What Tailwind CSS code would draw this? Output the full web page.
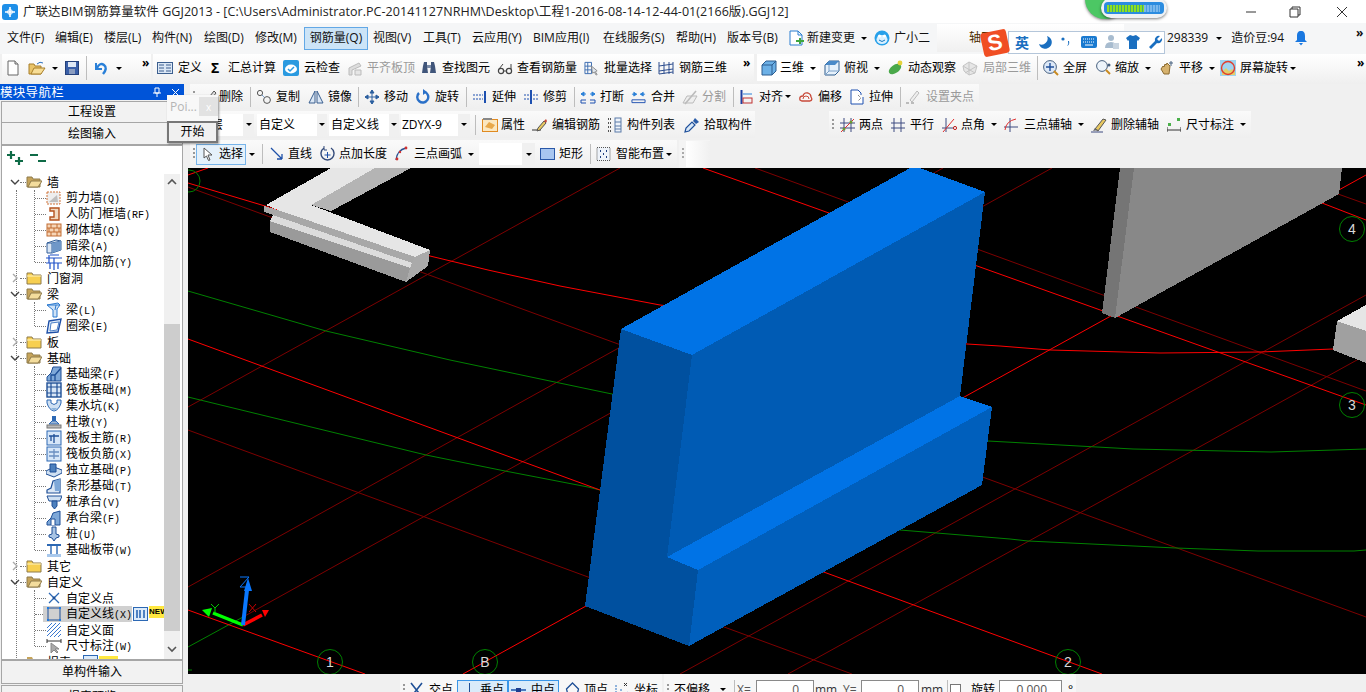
<!DOCTYPE html>
<html lang="zh">
<head>
<meta charset="utf-8">
<script src="https://cdn.jsdelivr.net/npm/@tailwindcss/browser@4"></script>
<title>GGJ2013</title>
</head>
<body class="relative w-[1366px] h-[692px] overflow-hidden bg-[#f0f0f0] text-black text-[12px] leading-4 whitespace-nowrap [font-family:'Open_Sans','Noto_Sans_CJK_SC',sans-serif]">

<!-- title bar -->
<div class="flex items-center h-[23px] bg-white">
  <svg class="w-4 h-4 ml-[2px] shrink-0" viewBox="0 0 16 16"><rect width="16" height="16" rx="3" fill="#1e8fe8"/><path d="M8 3v10M3 8h10" stroke="#fff" stroke-width="1.6"/><circle cx="8" cy="8" r="2.4" fill="none" stroke="#fff"/></svg>
  <span class="ml-[5px] text-[12.5px] tracking-[0.05px] text-[#222]">广联达BIM钢筋算量软件 GGJ2013 - [C:\Users\Administrator.PC-20141127NRHM\Desktop\工程1-2016-08-14-12-44-01(2166版).GGJ12]</span>
  <svg class="ml-auto w-[110px] h-[20px] shrink-0 mr-[12px]" viewBox="0 0 110 20"><path d="M2 10h10" stroke="#333"/><path d="M46 7h8v8h-8zM48 7V5h8v8h-2" fill="none" stroke="#333"/><path d="M93 5l10 10M103 5L93 15" stroke="#333"/></svg>
</div>

<!-- menu -->
<div class="flex items-center h-[31px] pb-[1px] bg-[#f5f6f7] pl-[7px] text-[#111]">
  <span class="w-[48px] shrink-0">文件(F)</span>
  <span class="w-[49px] shrink-0">编辑(E)</span>
  <span class="w-[48px] shrink-0">楼层(L)</span>
  <span class="w-[52px] shrink-0">构件(N)</span>
  <span class="w-[51px] shrink-0">绘图(D)</span>
  <span class="w-[49px] shrink-0">修改(M)</span>
  <span class="flex items-center justify-center w-[64px] h-[23px] shrink-0 bg-[#cce4f7] border border-[#62a8e6]">钢筋量(Q)</span>
  <span class="w-[50px] ml-[5px] shrink-0">视图(V)</span>
  <span class="w-[49px] shrink-0">工具(T)</span>
  <span class="w-[61px] shrink-0">云应用(Y)</span>
  <span class="w-[70px] shrink-0">BIM应用(I)</span>
  <span class="w-[73px] shrink-0">在线服务(S)</span>
  <span class="w-[51px] shrink-0">帮助(H)</span>
  <span class="w-[61px] shrink-0">版本号(B)</span>
  <div class="flex items-center w-[86px] shrink-0">
    <svg class="w-4 h-4 shrink-0" viewBox="0 0 16 16"><path d="M2 1h8l4 4v10H2z" fill="#fff" stroke="#2a7fd0"/><path d="M10 1v4h4" fill="none" stroke="#2a7fd0"/><path d="M8 10h3V8h2v2h3v2h-3v2h-2v-2H8z" fill="#3fa63f"/></svg>
    <span class="ml-[3px]">新建变更</span>
    <i class="ml-[6px] w-0 h-0 border-x-[3px] border-x-transparent border-t-[3px] border-t-black"></i>
  </div>
  <div class="flex items-center w-[63px] shrink-0">
    <svg class="w-4 h-4 shrink-0" viewBox="0 0 16 16"><circle cx="8" cy="8" r="7.5" fill="#26a0ea"/><ellipse cx="8" cy="9.5" rx="5.5" ry="4.5" fill="#d8f0ff"/><circle cx="5.5" cy="6" r="1.6" fill="#fff"/><circle cx="10.5" cy="6" r="1.6" fill="#fff"/><path d="M5 10q3 3 6 0" stroke="#1576bd" fill="none"/></svg>
    <span class="ml-[4px]">广小二</span>
  </div>
  <div class="flex items-center w-[187px] h-[28px] shrink-0 pl-[32px] bg-gradient-to-b from-white to-[#f0f0f0]"><span class="text-[#4a2b00]">轴网</span></div>
  <div class="flex items-center ml-[2px]">
    <span class="ml-[41px]">298339</span>
    <i class="ml-[8px] w-0 h-0 border-x-[3px] border-x-transparent border-t-[3px] border-t-black"></i>
    <span class="ml-[9px]">造价豆:94</span>
    <svg class="w-4 h-4 ml-[9px] shrink-0" viewBox="0 0 16 16"><path d="M8 1c-3 0-4 2-4 5v4l-2 2h12l-2-2V6c0-3-1-5-4-5z" fill="#1a78e0"/><path d="M6 13h4l-2 2.5z" fill="#1a78e0"/></svg>
    <span class="ml-[47px] font-bold leading-3 -mt-[10px]">»</span>
  </div>
</div>

<!-- main toolbar -->
<div class="flex h-[30px] bg-[#f0f0f0]">
  <div class="flex items-center w-[149px] ml-[2px] pl-[5px] pb-[2px] shrink-0 bg-gradient-to-b from-white to-[#efefef]">
    <svg class="w-[12px] h-4 shrink-0" viewBox="0 0 12 16"><path d="M1 1h7l3 3v11H1z" fill="#fff" stroke="#666"/><path d="M8 1v3h3" fill="#ddd" stroke="#666"/></svg>
    <svg class="w-[18px] h-4 ml-[9px] shrink-0" viewBox="0 0 18 16"><path d="M1 4h5l1 2h6v8H1z" fill="#e9c46a" stroke="#a87f2a"/><path d="M3 14l3-6h11l-4 6z" fill="#f7dd96" stroke="#a87f2a"/><path d="M9 4q3-3 6-1" stroke="#2a70c0" fill="none"/></svg>
    <i class="ml-[6px] w-0 h-0 border-x-[3px] border-x-transparent border-t-[3px] border-t-black"></i>
    <svg class="w-[14px] h-[14px] ml-[7px] shrink-0" viewBox="0 0 14 14"><rect x=".5" y=".5" width="13" height="13" fill="#3a5fa8" stroke="#24407a"/><rect x="3" y="1" width="8" height="5" fill="#dfe8f5"/><rect x="4" y="8" width="6" height="5" fill="#8b9dc0"/></svg>
    <i class="ml-[7px] w-px h-[24px] bg-[#bdbdbd]"></i>
    <svg class="w-[14px] h-[14px] ml-[7px] shrink-0" viewBox="0 0 14 14"><path d="M2 2v6h6" fill="none" stroke="#2a80d8" stroke-width="2"/><path d="M3 7q3-6 7-3t-1 9" fill="none" stroke="#2a80d8" stroke-width="2.4"/></svg>
    <i class="ml-[8px] w-0 h-0 border-x-[3px] border-x-transparent border-t-[3px] border-t-black"></i>
    <span class="ml-[20px] font-bold leading-3 -mt-[10px]">»</span>
  </div>
  <div class="flex items-center w-[601px] ml-[2px] pl-[4px] pb-[2px] shrink-0 bg-gradient-to-b from-white to-[#efefef]">
    <div class="flex items-center gap-[5px] w-[54px] shrink-0"><svg class="w-4 h-4 shrink-0" viewBox="0 0 16 16"><rect x=".5" y="2.5" width="15" height="11" fill="#dbe7f5" stroke="#3c5f8f"/><path d="M2 5h5M2 8h5M2 11h5M9 5h5M9 8h5M9 11h5" stroke="#3c5f8f"/></svg><span>定义</span></div>
    <div class="flex items-center w-[72px] shrink-0"><span class="w-[17px] font-bold text-[14px]">Σ</span><span>汇总计算</span></div>
    <div class="flex items-center gap-[5px] w-[64px] shrink-0"><svg class="w-4 h-4 shrink-0" viewBox="0 0 16 16"><rect width="16" height="16" rx="2" fill="#2a9ae0"/><ellipse cx="8" cy="9" rx="6" ry="4.4" fill="#fff"/><path d="M5 9l2 2 4-4" stroke="#2a9ae0" stroke-width="1.5" fill="none"/></svg><span>云检查</span></div>
    <div class="flex items-center gap-[4px] w-[74px] shrink-0 text-[#9a9a9a]"><svg class="w-4 h-4 shrink-0" viewBox="0 0 16 16"><path d="M2 8l10-5 2 3-9 4v5H2z" fill="#ddd" stroke="#bbb"/><path d="M8 10h6v5H8z" fill="#e6e6e6" stroke="#bbb"/></svg><span>平齐板顶</span></div>
    <div class="flex items-center gap-[5px] w-[76px] shrink-0"><svg class="w-4 h-4 shrink-0" viewBox="0 0 16 16"><path d="M3 2h3v4l1 7H1l1-7zM10 2h3l1 4 1 7H9l1-7z" fill="#40557a"/><rect x="6" y="5" width="4" height="3" fill="#7a8aa6"/></svg><span>查找图元</span></div>
    <div class="flex items-center gap-[4px] w-[87px] shrink-0"><svg class="w-4 h-4 shrink-0" viewBox="0 0 16 16"><circle cx="4" cy="11" r="2.6" fill="none" stroke="#444" stroke-width="1.2"/><circle cx="12" cy="11" r="2.6" fill="none" stroke="#444" stroke-width="1.2"/><path d="M2 9l4-5M14 9V4M6.5 11h3" stroke="#444"/></svg><span>查看钢筋量</span></div>
    <div class="flex items-center gap-[5px] w-[74px] shrink-0"><svg class="w-[15px] h-4 shrink-0" viewBox="0 0 16 16"><path d="M1 2h7v12H1zM1 6h7M1 10h7M4 2v12" fill="none" stroke="#3a6bb0"/><path d="M8 6l6 5-2 1 2 3-1 .5-2-3-2 1z" fill="#dfe6ee" stroke="#888"/></svg><span>批量选择</span></div>
    <div class="flex items-center gap-[5px] w-[85px] shrink-0"><svg class="w-4 h-4 shrink-0" viewBox="0 0 16 16"><path d="M1 2v12M6 2v12M11 2v12M15 2v12M1 6l14-2M1 11l14-2M1 14l14-2" fill="none" stroke="#2f4f8f"/></svg><span>钢筋三维</span></div>
    <span class="font-bold leading-3 -mt-[10px]">»</span>
  </div>
  <div class="flex items-center flex-1 ml-[3px] pb-[2px] bg-gradient-to-b from-white to-[#efefef]">
    <div class="flex items-center w-[63px] h-[25px] shrink-0 pl-[4px] bg-white">
      <svg class="w-4 h-4 shrink-0" viewBox="0 0 16 16"><path d="M1 5l4-4h10v10l-4 4H1z" fill="#6cb0e6" stroke="#2c5d8f"/><path d="M1 5h10v10M11 5l4-4" fill="none" stroke="#2c5d8f"/></svg><span class="ml-[3px]">三维</span><i class="ml-[6px] w-0 h-0 border-x-[3px] border-x-transparent border-t-[3px] border-t-black"></i>
    </div>
    <div class="flex items-center w-[64px] ml-[4px] shrink-0">
      <svg class="w-4 h-4 shrink-0" viewBox="0 0 16 16"><path d="M1 5l4-4h10v10l-4 4H1z" fill="#e6f1fb" stroke="#2c5d8f"/><path d="M5 1v10h10M1 15l4-4" fill="none" stroke="#7aa0c8"/><path d="M1 5l4-4h10l-4 4z" fill="#4a8ac8"/></svg><span class="ml-[4px]">俯视</span><i class="ml-[6px] w-0 h-0 border-x-[3px] border-x-transparent border-t-[3px] border-t-black"></i>
    </div>
    <div class="flex items-center gap-[4px] w-[74px] shrink-0"><svg class="w-4 h-4 shrink-0" viewBox="0 0 16 16"><ellipse cx="7" cy="9" rx="7" ry="4" transform="rotate(-35 7 9)" fill="#4aa84a"/><circle cx="12" cy="3" r="2.4" fill="#e6d23c"/></svg><span>动态观察</span></div>
    <div class="flex items-center gap-[5px] w-[75px] shrink-0 text-[#9a9a9a]"><svg class="w-4 h-4 shrink-0" viewBox="0 0 16 16"><path d="M1 6l6-4 8 4-2 7-6 2-5-4z" fill="#e6e6e6" stroke="#c4c4c4"/><path d="M7 2v13M1 6l12 7M15 6L3 13" stroke="#c4c4c4"/></svg><span>局部三维</span></div>
    <i class="w-px h-[24px] bg-[#bdbdbd] mr-[5px]"></i>
    <div class="flex items-center gap-[4px] w-[52px] shrink-0"><svg class="w-4 h-4 shrink-0" viewBox="0 0 16 16"><circle cx="7" cy="7" r="6.4" fill="#dce8f7" stroke="#47607f"/><path d="M7 3v8M3 7h8" stroke="#1f4f9a" stroke-width="1.4"/><path d="M11 11l4 4" stroke="#c98a20" stroke-width="2"/></svg><span>全屏</span></div>
    <div class="flex items-center gap-[4px] w-[64px] shrink-0"><svg class="w-4 h-4 shrink-0" viewBox="0 0 16 16"><circle cx="7" cy="6" r="5.4" fill="#edf4fb" stroke="#47607f"/><path d="M11 10l4 4" stroke="#c98a20" stroke-width="2"/><circle cx="14" cy="5" r="1.5" fill="#47607f"/></svg><span>缩放</span><i class="ml-[2px] w-0 h-0 border-x-[3px] border-x-transparent border-t-[3px] border-t-black"></i></div>
    <div class="flex items-center gap-[4px] w-[61px] shrink-0"><svg class="w-4 h-4 shrink-0" viewBox="0 0 16 16"><path d="M2 9l2-3 1 1 1-3 1 1 1-2 2 2 1 1-1 8H5z" fill="#d6b26e" stroke="#8a6a30"/><path d="M12 1v5M10 3h4" stroke="#47607f"/></svg><span>平移</span><i class="ml-[2px] w-0 h-0 border-x-[3px] border-x-transparent border-t-[3px] border-t-black"></i></div>
    <div class="flex items-center gap-[4px] shrink-0"><svg class="w-4 h-4 shrink-0" viewBox="0 0 16 16"><rect width="16" height="16" fill="#9fd3ef"/><path d="M2 12l4-4 3 3 3-2 3 3v3H2z" fill="#e2cf6a"/><circle cx="8" cy="8" r="6.5" fill="none" stroke="#e03c2c" stroke-width="1.4"/></svg><span>屏幕旋转</span><i class="-ml-[2px] w-0 h-0 border-x-[3px] border-x-transparent border-t-[3px] border-t-black"></i></div>
    <span class="ml-[61px] font-bold leading-3 -mt-[10px]">»</span>
  </div>
</div>

<div class="flex h-[608px]">
  <!-- left panel -->
  <div class="flex flex-col w-[184px] shrink-0">
    <div class="flex items-center h-[16px] bg-[#0054d8] text-white text-[12.5px] tracking-[0.3px] leading-4 shrink-0">
      <span class="[font-family:'Noto_Sans_CJK_SC',sans-serif]">模块导航栏</span>
      <svg class="w-[10px] h-[10px] ml-[88px] shrink-0" viewBox="0 0 10 10"><path d="M3 1h4v5H3zM1 6h8M5 6v4" fill="none" stroke="#fff"/></svg>
      <svg class="w-[9px] h-[9px] ml-[9px] shrink-0" viewBox="0 0 9 9"><path d="M1 1l7 7M8 1L1 8" stroke="#fff"/></svg>
    </div>
    <div class="flex items-center justify-center h-[22px] mx-[1px] mt-[1px] shrink-0 bg-[#f2f2f2] border border-[#a6a6a6]">工程设置</div>
    <div class="flex items-center justify-center h-[22px] mx-[1px] shrink-0 bg-[#f2f2f2] border-x border-b border-[#a6a6a6]">绘图输入</div>
    <div class="flex flex-col h-[515px] mx-[1px] shrink-0 bg-white border border-[#a6a6a6] overflow-hidden">
      <div class="flex items-start h-[28px] pl-[5px] pt-[5px] shrink-0">
        <svg class="w-[16px] h-[15px] shrink-0" viewBox="0 0 16 15"><path d="M4 0v8M0 4h8M12 6v8M8 10h8" stroke="#0f6b47" stroke-width="2.2"/></svg>
        <svg class="w-[16px] h-[15px] ml-[7px] shrink-0" viewBox="0 0 16 15"><path d="M0 4h8M8 10h8" stroke="#0f6b47" stroke-width="2.2"/></svg>
      </div>
      <div class="relative flex flex-1 min-h-0">
        <div class="relative w-[162px] overflow-hidden shrink-0 text-[12px] leading-4 [font-family:'Noto_Sans_CJK_SC',sans-serif]">
          <i class="absolute left-[14px] top-[16px] h-[480px] border-l border-dotted border-[#777]"></i>
          <i class="absolute left-[32px] top-[16px] h-[72px] border-l border-dotted border-[#777]"></i>
          <i class="absolute left-[32px] top-[128px] h-[24px] border-l border-dotted border-[#777]"></i>
          <i class="absolute left-[32px] top-[192px] h-[184px] border-l border-dotted border-[#777]"></i>
          <i class="absolute left-[32px] top-[416px] h-[56px] border-l border-dotted border-[#777]"></i>

          <!-- 墙 -->
          <div class="relative flex items-center h-4 pl-[8px]"><svg class="w-[10px] h-4 shrink-0" viewBox="0 0 10 16"><path d="M1 6l4 4 4-4" fill="none" stroke="#444" stroke-width="1.4"/></svg><i class="w-[6px] shrink-0 border-t border-dotted border-[#777]"></i><svg class="w-4 h-4 shrink-0" viewBox="0 0 16 16"><path d="M1 3h5l1 2h7v8H1z" fill="#c6a45a" stroke="#8e7a4a"/><path d="M2 13l3-6h11l-4 6z" fill="#f3dc9c" stroke="#8e7a4a"/></svg><span class="ml-[5px]">墙</span></div>
          <div class="relative flex items-center h-4 pl-[33px]"><i class="w-[11px] shrink-0 border-t border-dotted border-[#777]"></i><svg class="w-4 h-4 shrink-0" viewBox="0 0 16 16"><rect x="1" y="2" width="13" height="12" fill="#eee" stroke="#d2743a" stroke-dasharray="2 1"/><path d="M3 12l8-7 1 7z" fill="#aaa" opacity=".7"/></svg><span class="ml-[4px]">剪力墙<span class="[font-family:'Liberation_Mono',monospace] text-[10px]">(Q)</span></span></div>
          <div class="relative flex items-center h-4 pl-[33px]"><i class="w-[11px] shrink-0 border-t border-dotted border-[#777]"></i><svg class="w-4 h-4 shrink-0" viewBox="0 0 16 16"><path d="M4 2h9v12H4v-3h4V5H4z" fill="#f1d9c0" stroke="#b4521e" stroke-width="1.4"/></svg><span class="ml-[4px]">人防门框墙<span class="[font-family:'Liberation_Mono',monospace] text-[10px]">(RF)</span></span></div>
          <div class="relative flex items-center h-4 pl-[33px]"><i class="w-[11px] shrink-0 border-t border-dotted border-[#777]"></i><svg class="w-4 h-4 shrink-0" viewBox="0 0 16 16"><rect x="1" y="2" width="14" height="12" fill="#f6d6b8" stroke="#c26c32"/><path d="M1 6h14M1 10h14M5 2v4M11 2v4M8 6v4M3 6v4M13 6v4M5 10v4M11 10v4" stroke="#c26c32"/></svg><span class="ml-[4px]">砌体墙<span class="[font-family:'Liberation_Mono',monospace] text-[10px]">(Q)</span></span></div>
          <div class="relative flex items-center h-4 pl-[33px]"><i class="w-[11px] shrink-0 border-t border-dotted border-[#777]"></i><svg class="w-4 h-4 shrink-0" viewBox="0 0 16 16"><path d="M1 5l9-3 5 1v9l-9 3H1z" fill="#dbe7f5" stroke="#335f99"/><path d="M1 5h5v10M6 5l9-2" fill="none" stroke="#335f99"/><path d="M6 5l9-2v9l-9 3z" fill="#6f97c8"/></svg><span class="ml-[4px]">暗梁<span class="[font-family:'Liberation_Mono',monospace] text-[10px]">(A)</span></span></div>
          <div class="relative flex items-center h-4 pl-[33px]"><i class="w-[11px] shrink-0 border-t border-dotted border-[#777]"></i><svg class="w-4 h-4 shrink-0" viewBox="0 0 16 16"><path d="M0 4h16M0 9h16M4 1h9M8 4v12M4 9v6M12 9v6M3 1v8" fill="none" stroke="#1e50c8" stroke-width="1.2"/></svg><span class="ml-[4px]">砌体加筋<span class="[font-family:'Liberation_Mono',monospace] text-[10px]">(Y)</span></span></div>

          <!-- 门窗洞 -->
          <div class="relative flex items-center h-4 pl-[8px]"><svg class="w-[10px] h-4 shrink-0" viewBox="0 0 10 16"><path d="M3 4l4 4-4 4" fill="none" stroke="#aaa" stroke-width="1.4"/></svg><i class="w-[6px] shrink-0 border-t border-dotted border-[#777]"></i><svg class="w-4 h-4 shrink-0" viewBox="0 0 16 16"><path d="M1 3h5l1 2h8v9H1z" fill="#f7cf50" stroke="#8e7a4a"/><path d="M1 6h14" stroke="#fff3c0"/></svg><span class="ml-[5px]">门窗洞</span></div>

          <!-- 梁 -->
          <div class="relative flex items-center h-4 pl-[8px]"><svg class="w-[10px] h-4 shrink-0" viewBox="0 0 10 16"><path d="M1 6l4 4 4-4" fill="none" stroke="#444" stroke-width="1.4"/></svg><i class="w-[6px] shrink-0 border-t border-dotted border-[#777]"></i><svg class="w-4 h-4 shrink-0" viewBox="0 0 16 16"><path d="M1 3h5l1 2h7v8H1z" fill="#c6a45a" stroke="#8e7a4a"/><path d="M2 13l3-6h11l-4 6z" fill="#f3dc9c" stroke="#8e7a4a"/></svg><span class="ml-[5px]">梁</span></div>
          <div class="relative flex items-center h-4 pl-[33px]"><i class="w-[11px] shrink-0 border-t border-dotted border-[#777]"></i><svg class="w-4 h-4 shrink-0" viewBox="0 0 16 16"><path d="M1 3l11-2 2 2-3 4v8H7V8z" fill="#cfe2f6" stroke="#2d7ad0"/><path d="M1 3h9l-1 5M10 3l4 0" fill="none" stroke="#2d7ad0"/></svg><span class="ml-[4px]">梁<span class="[font-family:'Liberation_Mono',monospace] text-[10px]">(L)</span></span></div>
          <div class="relative flex items-center h-4 pl-[33px]"><i class="w-[11px] shrink-0 border-t border-dotted border-[#777]"></i><svg class="w-4 h-4 shrink-0" viewBox="0 0 16 16"><path d="M3 3l12-2-3 13-11 1z" fill="#e3eefa" stroke="#1e50a8" stroke-width="1.4"/><path d="M5 5l8-1-2 8-7 1z" fill="#fff" stroke="#4b7fc8"/></svg><span class="ml-[4px]">圈梁<span class="[font-family:'Liberation_Mono',monospace] text-[10px]">(E)</span></span></div>

          <!-- 板 -->
          <div class="relative flex items-center h-4 pl-[8px]"><svg class="w-[10px] h-4 shrink-0" viewBox="0 0 10 16"><path d="M3 4l4 4-4 4" fill="none" stroke="#aaa" stroke-width="1.4"/></svg><i class="w-[6px] shrink-0 border-t border-dotted border-[#777]"></i><svg class="w-4 h-4 shrink-0" viewBox="0 0 16 16"><path d="M1 3h5l1 2h8v9H1z" fill="#f7cf50" stroke="#8e7a4a"/><path d="M1 6h14" stroke="#fff3c0"/></svg><span class="ml-[5px]">板</span></div>

          <!-- 基础 -->
          <div class="relative flex items-center h-4 pl-[8px]"><svg class="w-[10px] h-4 shrink-0" viewBox="0 0 10 16"><path d="M1 6l4 4 4-4" fill="none" stroke="#444" stroke-width="1.4"/></svg><i class="w-[6px] shrink-0 border-t border-dotted border-[#777]"></i><svg class="w-4 h-4 shrink-0" viewBox="0 0 16 16"><path d="M1 3h5l1 2h7v8H1z" fill="#c6a45a" stroke="#8e7a4a"/><path d="M2 13l3-6h11l-4 6z" fill="#f3dc9c" stroke="#8e7a4a"/></svg><span class="ml-[5px]">基础</span></div>
          <div class="relative flex items-center h-4 pl-[33px]"><i class="w-[11px] shrink-0 border-t border-dotted border-[#777]"></i><svg class="w-4 h-4 shrink-0" viewBox="0 0 16 16"><path d="M1 15V11l4-4 2-6h8v14z" fill="#7ea8d8" stroke="#1e4f96"/><path d="M5 15V9h4v6M9 9l6-7" fill="none" stroke="#1e4f96" stroke-width="1.3"/></svg><span class="ml-[4px]">基础梁<span class="[font-family:'Liberation_Mono',monospace] text-[10px]">(F)</span></span></div>
          <div class="relative flex items-center h-4 pl-[33px]"><i class="w-[11px] shrink-0 border-t border-dotted border-[#777]"></i><svg class="w-4 h-4 shrink-0" viewBox="0 0 16 16"><rect x="1" y="1" width="14" height="14" fill="#d8e6f6" stroke="#1e4f96" stroke-width="1.4"/><path d="M1 5h14M1 11h14M5 1v14M11 1v14" stroke="#1e4f96" stroke-width="1.2"/></svg><span class="ml-[4px]">筏板基础<span class="[font-family:'Liberation_Mono',monospace] text-[10px]">(M)</span></span></div>
          <div class="relative flex items-center h-4 pl-[33px]"><i class="w-[11px] shrink-0 border-t border-dotted border-[#777]"></i><svg class="w-4 h-4 shrink-0" viewBox="0 0 16 16"><path d="M1 2h4v3q3 3 6 0V2h4v3q-2 7-7 8-5-1-7-8z" fill="#cfe0f2" stroke="#2c68b4"/><path d="M5 10h6l-3 3z" fill="#8cb4de"/></svg><span class="ml-[4px]">集水坑<span class="[font-family:'Liberation_Mono',monospace] text-[10px]">(K)</span></span></div>
          <div class="relative flex items-center h-4 pl-[33px]"><i class="w-[11px] shrink-0 border-t border-dotted border-[#777]"></i><svg class="w-4 h-4 shrink-0" viewBox="0 0 16 16"><path d="M6 2h4v5H6z" fill="#2c68b4"/><path d="M3 10l3-3h4l3 3z" fill="#9fb8d6" stroke="#2c68b4"/><rect x="1" y="11" width="14" height="3" fill="#bbb" stroke="#777"/></svg><span class="ml-[4px]">柱墩<span class="[font-family:'Liberation_Mono',monospace] text-[10px]">(Y)</span></span></div>
          <div class="relative flex items-center h-4 pl-[33px]"><i class="w-[11px] shrink-0 border-t border-dotted border-[#777]"></i><svg class="w-4 h-4 shrink-0" viewBox="0 0 16 16"><rect x="1" y="1" width="14" height="14" fill="#d6e6f8" stroke="#2c68b4"/><path d="M3 6h10M8 4v9M5 6v5" fill="none" stroke="#1e4f96" stroke-width="1.3"/></svg><span class="ml-[4px]">筏板主筋<span class="[font-family:'Liberation_Mono',monospace] text-[10px]">(R)</span></span></div>
          <div class="relative flex items-center h-4 pl-[33px]"><i class="w-[11px] shrink-0 border-t border-dotted border-[#777]"></i><svg class="w-4 h-4 shrink-0" viewBox="0 0 16 16"><rect x="1" y="1" width="14" height="14" fill="#d6e6f8" stroke="#2c68b4"/><path d="M3 6h10M3 10h10M8 3v10" fill="none" stroke="#6a8fc0" stroke-width="1.3"/></svg><span class="ml-[4px]">筏板负筋<span class="[font-family:'Liberation_Mono',monospace] text-[10px]">(X)</span></span></div>
          <div class="relative flex items-center h-4 pl-[33px]"><i class="w-[11px] shrink-0 border-t border-dotted border-[#777]"></i><svg class="w-4 h-4 shrink-0" viewBox="0 0 16 16"><path d="M0 9l8-4 8 3v3l-8 4-8-3z" fill="#cfe0f2" stroke="#1e4f96"/><path d="M4 2h6v8H4z" fill="#4d80bd" stroke="#1e4f96"/></svg><span class="ml-[4px]">独立基础<span class="[font-family:'Liberation_Mono',monospace] text-[10px]">(P)</span></span></div>
          <div class="relative flex items-center h-4 pl-[33px]"><i class="w-[11px] shrink-0 border-t border-dotted border-[#777]"></i><svg class="w-4 h-4 shrink-0" viewBox="0 0 16 16"><path d="M1 15v-3l4-2 2-7 7-2v14z" fill="#dbe7f5" stroke="#1e4f96" stroke-width="1.2"/><path d="M8 3l6-2v12H9z" fill="#7ea8d8"/></svg><span class="ml-[4px]">条形基础<span class="[font-family:'Liberation_Mono',monospace] text-[10px]">(T)</span></span></div>
          <div class="relative flex items-center h-4 pl-[33px]"><i class="w-[11px] shrink-0 border-t border-dotted border-[#777]"></i><svg class="w-4 h-4 shrink-0" viewBox="0 0 16 16"><path d="M1 2h15l-2 5H3z" fill="#cfe0f2" stroke="#1e4f96"/><path d="M6 7h5v5l-2.500 3L6 12z" fill="#4d80bd" stroke="#1e4f96"/></svg><span class="ml-[4px]">桩承台<span class="[font-family:'Liberation_Mono',monospace] text-[10px]">(V)</span></span></div>
          <div class="relative flex items-center h-4 pl-[33px]"><i class="w-[11px] shrink-0 border-t border-dotted border-[#777]"></i><svg class="w-4 h-4 shrink-0" viewBox="0 0 16 16"><path d="M1 15v-3l4-4 2-5 7-2v14z" fill="#7ea8d8" stroke="#1e4f96"/><path d="M5 15V9h4v6" fill="#fff" stroke="#1e4f96"/></svg><span class="ml-[4px]">承台梁<span class="[font-family:'Liberation_Mono',monospace] text-[10px]">(F)</span></span></div>
          <div class="relative flex items-center h-4 pl-[33px]"><i class="w-[11px] shrink-0 border-t border-dotted border-[#777]"></i><svg class="w-4 h-4 shrink-0" viewBox="0 0 16 16"><path d="M6 1h4v7l3 1v2l-3 1-2 3-2-3-3-1V9l3-1z" fill="#a8c4e4" stroke="#1e4f96"/></svg><span class="ml-[4px]">桩<span class="[font-family:'Liberation_Mono',monospace] text-[10px]">(U)</span></span></div>
          <div class="relative flex items-center h-4 pl-[33px]"><i class="w-[11px] shrink-0 border-t border-dotted border-[#777]"></i><svg class="w-4 h-4 shrink-0" viewBox="0 0 16 16"><rect x="1" y="2" width="14" height="2" fill="#2c68b4"/><path d="M5 4v8M11 4v8" stroke="#2c68b4" stroke-width="1.4"/><rect x="1" y="12" width="14" height="3" fill="#a8c8ec"/></svg><span class="ml-[4px]">基础板带<span class="[font-family:'Liberation_Mono',monospace] text-[10px]">(W)</span></span></div>

          <!-- 其它 -->
          <div class="relative flex items-center h-4 pl-[8px]"><svg class="w-[10px] h-4 shrink-0" viewBox="0 0 10 16"><path d="M3 4l4 4-4 4" fill="none" stroke="#aaa" stroke-width="1.4"/></svg><i class="w-[6px] shrink-0 border-t border-dotted border-[#777]"></i><svg class="w-4 h-4 shrink-0" viewBox="0 0 16 16"><path d="M1 3h5l1 2h8v9H1z" fill="#f7cf50" stroke="#8e7a4a"/><path d="M1 6h14" stroke="#fff3c0"/></svg><span class="ml-[5px]">其它</span></div>

          <!-- 自定义 -->
          <div class="relative flex items-center h-4 pl-[8px]"><svg class="w-[10px] h-4 shrink-0" viewBox="0 0 10 16"><path d="M1 6l4 4 4-4" fill="none" stroke="#444" stroke-width="1.4"/></svg><i class="w-[6px] shrink-0 border-t border-dotted border-[#777]"></i><svg class="w-4 h-4 shrink-0" viewBox="0 0 16 16"><path d="M1 3h5l1 2h7v8H1z" fill="#c6a45a" stroke="#8e7a4a"/><path d="M2 13l3-6h11l-4 6z" fill="#f3dc9c" stroke="#8e7a4a"/></svg><span class="ml-[5px]">自定义</span></div>
          <div class="relative flex items-center h-4 pl-[33px]"><i class="w-[11px] shrink-0 border-t border-dotted border-[#777]"></i><svg class="w-4 h-4 shrink-0" viewBox="0 0 16 16"><path d="M3 3l10 10M13 3L3 13" stroke="#2c68b4" stroke-width="1.3"/><circle cx="8" cy="8" r="1.4" fill="#1e4f96"/></svg><span class="ml-[4px]">自定义点</span></div>
          <div class="relative flex items-center h-4 pl-[33px]"><i class="w-[8px] shrink-0 border-t border-dotted border-[#777]"></i><div class="flex items-center h-4 pl-[3px] shrink-0 bg-[#d0d0d0]"><svg class="w-4 h-4 shrink-0" viewBox="0 0 16 16"><rect x="2" y="2" width="12" height="12" fill="none" stroke="#1e4f96"/><path d="M1 1h2v2H1zM13 1h2v2h-2zM1 13h2v2H1zM13 13h2v2h-2z" fill="#1e7ae0"/></svg><span class="ml-[4px]">自定义线<span class="[font-family:'Liberation_Mono',monospace] text-[10px]">(X)</span></span></div><svg class="w-[15px] h-[14px] ml-[1px] shrink-0" viewBox="0 0 15 14"><rect x=".5" y=".5" width="14" height="13" fill="#dcebfa" stroke="#2c68b4"/><path d="M4 3v8M7 3v8M11 3v8" stroke="#2c68b4" stroke-width="1.6"/></svg><span class="ml-[1px] -mt-[4px] text-[8px] leading-3 font-bold bg-[#ffe840] [font-family:'Liberation_Sans',sans-serif]">NEW</span></div>
          <div class="relative flex items-center h-4 pl-[33px]"><i class="w-[11px] shrink-0 border-t border-dotted border-[#777]"></i><svg class="w-4 h-4 shrink-0" viewBox="0 0 16 16"><path d="M1 6l5-5M1 10l9-9M1 14L14 1M4 15L15 4M8 15l7-7M12 15l3-3" stroke="#3a78d0"/></svg><span class="ml-[4px]">自定义面</span></div>
          <div class="relative flex items-center h-4 pl-[33px]"><i class="w-[11px] shrink-0 border-t border-dotted border-[#777]"></i><svg class="w-4 h-4 shrink-0" viewBox="0 0 16 16"><path d="M1 1v4M15 1v4M1 3h14" stroke="#333"/><path d="M5 5v10l3-3 3 3 1-1-3-3h4z" fill="#aaa" stroke="#888"/></svg><span class="ml-[4px]">尺寸标注<span class="[font-family:'Liberation_Mono',monospace] text-[10px]">(W)</span></span></div>
          <div class="relative flex items-center h-4 pl-[24px]"><svg class="w-4 h-4 shrink-0" viewBox="0 0 16 16"><path d="M1 3h5l1 2h7v8H1z" fill="#c6a45a"/></svg><span class="ml-[5px]">报表</span><svg class="w-[15px] h-[14px] ml-[12px] shrink-0" viewBox="0 0 15 14"><rect x=".5" y=".5" width="14" height="13" fill="#dcebfa" stroke="#2c68b4"/></svg><span class="ml-[1px] text-[8px] leading-3 font-bold bg-[#ffe840] [font-family:'Liberation_Sans',sans-serif]">NEW</span></div>
        </div>
        <!-- scrollbar -->
        <div class="flex flex-col w-[16px] shrink-0 bg-[#f0f0f0]">
          <svg class="w-4 h-4 shrink-0" viewBox="0 0 16 16"><path d="M4 10l4-4 4 4" fill="none" stroke="#555" stroke-width="1.6"/></svg>
          <div class="h-[134px] shrink-0"></div>
          <div class="h-[307px] shrink-0 bg-[#cdcdcd]"></div>
          <div class="h-[10px] shrink-0"></div>
          <svg class="w-4 h-4 shrink-0" viewBox="0 0 16 16"><path d="M4 6l4 4 4-4" fill="none" stroke="#555" stroke-width="1.6"/></svg>
        </div>
      </div>
    </div>
    <div class="flex items-center justify-center h-[24px] mx-[1px] shrink-0 bg-[#f2f2f2] border border-[#a6a6a6]">单构件输入</div>
    <div class="flex items-center justify-center h-[24px] mx-[1px] mt-[1px] shrink-0 bg-[#f2f2f2] border border-[#a6a6a6]">报表预览</div>
  </div>

  <!-- right -->
  <div class="flex flex-col ml-[4px] w-[1178px] shrink-0">
    <!-- row 3: edit tools -->
    <div class="h-[27px] shrink-0">
      <div class="flex items-center w-[789px] h-[25px] ml-[2px] pl-[3px] bg-gradient-to-b from-[#fafafa] to-[#efefef]">
        <svg class="w-[3px] h-[14px] shrink-0" viewBox="0 0 3 14"><path d="M1 1v12" stroke="#999" stroke-width="2" stroke-dasharray="2 2"/></svg>
        <div class="flex items-center gap-[2px] w-[45px] ml-[9px] shrink-0"><svg class="w-[12px] h-4 shrink-0" viewBox="0 0 12 16"><path d="M1 12L9 2l2 2-7 9z" fill="#ddd" stroke="#555"/></svg><span>删除</span></div>
        <i class="w-px h-[20px] bg-[#bdbdbd] mr-[5px]"></i>
        <div class="flex items-center gap-[4px] w-[52px] shrink-0"><svg class="w-4 h-4 shrink-0" viewBox="0 0 16 16"><circle cx="4" cy="4" r="2.6" fill="none" stroke="#555"/><circle cx="11" cy="11" r="3.4" fill="none" stroke="#555"/><path d="M6 6l3 3" stroke="#2a70c0" stroke-dasharray="1 1"/></svg><span>复制</span></div>
        <div class="flex items-center gap-[4px] w-[50px] shrink-0"><svg class="w-4 h-4 shrink-0" viewBox="0 0 16 16"><path d="M7 2v12H1zM9 2v12h6z" fill="#dbe7f5" stroke="#3a5f8f"/></svg><span>镜像</span></div>
        <i class="w-px h-[20px] bg-[#bdbdbd] mr-[6px]"></i>
        <div class="flex items-center gap-[5px] w-[51px] shrink-0"><svg class="w-[14px] h-4 shrink-0" viewBox="0 0 14 16"><path d="M7 1v14M0 8h14M7 1L5 4h4zM7 15l-2-3h4zM0 8l3-2v4zM14 8l-3-2v4z" fill="#2a5f9f" stroke="#2a5f9f"/></svg><span>移动</span></div>
        <div class="flex items-center gap-[5px] w-[50px] shrink-0"><svg class="w-[14px] h-4 shrink-0" viewBox="0 0 14 16"><path d="M3 4a5.500 5.500 0 1 0 6-1" fill="none" stroke="#2a70c8" stroke-width="2.400"/><path d="M7 0v6l4-3z" fill="#2a70c8"/></svg><span>旋转</span></div>
        <i class="w-px h-[20px] bg-[#bdbdbd] mr-[6px]"></i>
        <div class="flex items-center gap-[5px] w-[51px] shrink-0"><svg class="w-[14px] h-4 shrink-0" viewBox="0 0 14 16"><path d="M0 6h10M0 10h10" stroke="#1e50b0" stroke-dasharray="2 1"/><path d="M12 2v12" stroke="#1e50b0" stroke-width="2"/></svg><span>延伸</span></div>
        <div class="flex items-center gap-[5px] w-[50px] shrink-0"><svg class="w-[14px] h-4 shrink-0" viewBox="0 0 14 16"><path d="M0 6h6M0 10h6M9 6h5M9 10h5" stroke="#1e50b0" stroke-dasharray="2 1"/><path d="M7 1v14" stroke="#1e50b0" stroke-width="2"/></svg><span>修剪</span></div>
        <i class="w-px h-[20px] bg-[#bdbdbd] mr-[5px]"></i>
        <div class="flex items-center gap-[4px] w-[51px] shrink-0"><svg class="w-4 h-4 shrink-0" viewBox="0 0 16 16"><path d="M1 11h5M10 11h5M1 14h5M10 14h5M1 11v3M15 11v3" stroke="#1e50b0" fill="none"/><path d="M6 5H1M1 5l3-2v4zM10 5h5M15 5l-3-2v4z" fill="#2a80d8" stroke="#2a80d8"/></svg><span>打断</span></div>
        <div class="flex items-center gap-[5px] w-[51px] shrink-0"><svg class="w-[15px] h-4 shrink-0" viewBox="0 0 16 16"><path d="M1 11h14M1 14h14M1 11v3M15 11v3" stroke="#1e50b0" fill="none"/><path d="M1 5h5M6 5L3 3v4zM15 5h-5M10 5l3-2v4z" fill="#2a80d8" stroke="#2a80d8"/></svg><span>合并</span></div>
        <div class="flex items-center gap-[4px] w-[51px] shrink-0 text-[#9a9a9a]"><svg class="w-4 h-4 shrink-0" viewBox="0 0 16 16"><path d="M1 14l4-7h10l-4 7z" fill="#eee" stroke="#bbb"/><path d="M3 15L14 2" stroke="#bbb" stroke-width="1.600"/></svg><span>分割</span></div>
        <i class="w-px h-[20px] bg-[#bdbdbd] mr-[6px]"></i>
        <div class="flex items-center w-[59px] shrink-0"><svg class="w-[13px] h-4 shrink-0" viewBox="0 0 13 16"><path d="M1.500 1v14" stroke="#1e3fa0" stroke-width="2"/><path d="M3 5h9" stroke="#2a80d8"/><rect x="3" y="9" width="9" height="5" fill="none" stroke="#c03030"/></svg><span class="ml-[6px]">对齐</span><i class="ml-[2px] w-0 h-0 border-x-[3px] border-x-transparent border-t-[3px] border-t-black"></i></div>
        <div class="flex items-center gap-[5px] w-[51px] shrink-0"><svg class="w-[14px] h-4 shrink-0" viewBox="0 0 14 16"><path d="M1 11q-1-4 3-4 1-4 5-3 3 1 3 4 2 3-1 4H3z" fill="#f7f7f7" stroke="#c84a3a" stroke-width="1.300"/><path d="M4 10q0-3 3-3 3 0 3 3" fill="none" stroke="#c84a3a"/></svg><span>偏移</span></div>
        <div class="flex items-center gap-[5px] w-[50px] shrink-0"><svg class="w-[14px] h-4 shrink-0" viewBox="0 0 14 16"><path d="M1 1h7l3 3v2M1 1v14h12V8" fill="#fff" stroke="#1e50b0"/><path d="M8 6l3 3-3 3" fill="none" stroke="#555" stroke-dasharray="1 1"/></svg><span>拉伸</span></div>
        <i class="w-px h-[20px] bg-[#bdbdbd] mr-[5px]"></i>
        <div class="flex items-center gap-[6px] shrink-0 text-[#9a9a9a]"><svg class="w-[14px] h-4 shrink-0" viewBox="0 0 14 16"><path d="M4 11l7-9 2 2-7 9z" fill="#eee" stroke="#bbb"/><path d="M0 14h3M5 14h3" stroke="#bbb" stroke-width="2"/></svg><span>设置夹点</span></div>
      </div>
    </div>
    <!-- row 4 -->
    <div class="flex h-[28px] shrink-0 ml-[2px]">
      <div class="flex items-center w-[565px] h-[27px] shrink-0 bg-gradient-to-b from-[#fafafa] to-[#efefef]">
        <div class="flex items-center justify-end w-[64px] h-[22px] shrink-0 bg-white"><span class="mr-[20px]">首层</span><div class="flex items-center justify-center w-[11px] h-[22px] bg-[#f0f0f0]"><i class="w-0 h-0 border-x-[3px] border-x-transparent border-t-[3px] border-t-black"></i></div></div>
        <div class="flex items-center w-[70px] h-[22px] ml-[3px] pl-[2px] shrink-0 bg-white"><span>自定义</span><div class="flex items-center justify-center w-[10px] h-[22px] ml-auto bg-[#f0f0f0]"><i class="w-0 h-0 border-x-[3px] border-x-transparent border-t-[3px] border-t-black"></i></div></div>
        <div class="flex items-center w-[70px] h-[22px] ml-[2px] pl-[2px] shrink-0 bg-white"><span>自定义线</span><div class="flex items-center justify-center w-[10px] h-[22px] ml-auto bg-[#f0f0f0]"><i class="w-0 h-0 border-x-[3px] border-x-transparent border-t-[3px] border-t-black"></i></div></div>
        <div class="flex items-center w-[69px] h-[22px] ml-[2px] pl-[1px] shrink-0 bg-white"><span>ZDYX-9</span><div class="flex items-center justify-center w-[12px] h-[22px] ml-auto bg-[#f0f0f0]"><i class="w-0 h-0 border-x-[3px] border-x-transparent border-t-[3px] border-t-black"></i></div></div>
        <i class="w-px h-[20px] ml-[5px] mr-[6px] bg-[#bdbdbd]"></i>
        <div class="flex items-center gap-[3px] w-[50px] shrink-0"><svg class="w-4 h-4 shrink-0" viewBox="0 0 16 16"><rect x=".5" y="2.500" width="15" height="12" fill="#fbe7c0" stroke="#e08a20"/><path d="M3 10l4-5 6 3-3 4z" fill="#e8a84a"/><path d="M1 1h9v2H1z" fill="#888"/></svg><span>属性</span></div>
        <div class="flex items-center gap-[4px] w-[76px] shrink-0"><svg class="w-4 h-4 shrink-0" viewBox="0 0 16 16"><path d="M0 13h9" stroke="#333"/><path d="M6 11l6-7 2 2-6 7-3 1z" fill="#e8c860" stroke="#555"/><path d="M12 4l2-2 1 2-1 2z" fill="#c84a3a"/></svg><span>编辑钢筋</span></div>
        <div class="flex items-center gap-[5px] w-[76px] shrink-0"><svg class="w-[14px] h-4 shrink-0" viewBox="0 0 14 16"><path d="M0 2h4M0 6h4M0 10h4M0 14h4" stroke="#555" stroke-dasharray="1 1" stroke-width="2"/><rect x="7" y="1" width="6" height="14" fill="#eef3fa" stroke="#5a7aa8"/><path d="M7 5h6M7 9h6M7 12h6" stroke="#5a7aa8"/></svg><span>构件列表</span></div>
        <div class="flex items-center gap-[4px] shrink-0"><svg class="w-4 h-4 shrink-0" viewBox="0 0 16 16"><path d="M1 15l1-4 6-6 3 3-6 6z" fill="#d8e8f8" stroke="#1e4f9a" stroke-width="1.200"/><path d="M9 4l2-3 4 4-3 2z" fill="#2a5ca8"/></svg><span>拾取构件</span></div>
      </div>
      <div class="flex items-center w-[422px] h-[27px] ml-[74px] pl-[3px] shrink-0 bg-gradient-to-b from-[#fafafa] to-[#efefef]">
        <svg class="w-[3px] h-[14px] shrink-0" viewBox="0 0 3 14"><path d="M1 1v12" stroke="#999" stroke-width="2" stroke-dasharray="2 2"/></svg>
        <div class="flex items-center gap-[4px] w-[51px] ml-[5px] shrink-0"><svg class="w-[15px] h-4 shrink-0" viewBox="0 0 15 16"><path d="M4 1v14M11 1v14M0 6h15M0 11h15" stroke="#3c4a80"/><path d="M1 15L14 2" stroke="#e03030"/><circle cx="4" cy="12" r="1.500" fill="#6a9a30"/><circle cx="11" cy="5" r="1.500" fill="#6a9a30"/></svg><span>两点</span></div>
        <div class="flex items-center gap-[5px] w-[51px] shrink-0"><svg class="w-[14px] h-4 shrink-0" viewBox="0 0 14 16"><path d="M3 1v14M10 1v14M0 6h14M0 11h14" stroke="#3c4a80"/></svg><span>平行</span></div>
        <div class="flex items-center gap-[4px] w-[62px] shrink-0"><svg class="w-[15px] h-4 shrink-0" viewBox="0 0 15 16"><path d="M4 1v14M0 11h12" stroke="#3c4a80"/><path d="M1 15L12 2" stroke="#e03030"/><circle cx="13" cy="11" r="1.600" fill="none" stroke="#c02020"/></svg><span>点角</span><i class="ml-[2px] w-0 h-0 border-x-[3px] border-x-transparent border-t-[3px] border-t-black"></i></div>
        <div class="flex items-center gap-[6px] w-[87px] shrink-0"><svg class="w-[14px] h-4 shrink-0" viewBox="0 0 14 16"><path d="M6 1v14M0 10h14" stroke="#3c4a80"/><path d="M1 13Q2 4 12 2" fill="none" stroke="#e03030"/></svg><span>三点辅轴</span><i class="w-0 h-0 border-x-[3px] border-x-transparent border-t-[3px] border-t-black"></i></div>
        <div class="flex items-center gap-[4px] w-[76px] shrink-0"><svg class="w-4 h-4 shrink-0" viewBox="0 0 16 16"><path d="M0 15h12" stroke="#3c4a80"/><path d="M4 12l8-10 3 1-8 11z" fill="#e8c860" stroke="#555"/><path d="M2 14l2-3 3 2z" fill="#666"/></svg><span>删除辅轴</span></div>
        <div class="flex items-center gap-[5px] shrink-0"><svg class="w-[14px] h-4 shrink-0" viewBox="0 0 14 16"><path d="M0 10v5M14 10v5M0 13h14" stroke="#333"/><rect x="1" y="6" width="3" height="3" fill="#4ab04a"/><rect x="10" y="1" width="3" height="3" fill="#4ab04a"/></svg><span>尺寸标注</span><i class="ml-[1px] w-0 h-0 border-x-[3px] border-x-transparent border-t-[3px] border-t-black"></i></div>
      </div>
    </div>
    <!-- row 5 -->
    <div class="flex h-[29px] shrink-0 ml-[2px] pt-[1px]">
      <div class="flex items-center w-[487px] shrink-0 pl-[3px] bg-gradient-to-b from-[#fafafa] to-[#efefef]">
        <svg class="w-[3px] h-[14px] shrink-0" viewBox="0 0 3 14"><path d="M1 1v12" stroke="#999" stroke-width="2" stroke-dasharray="2 2"/></svg>
        <div class="flex items-center w-[50px] h-[21px] pl-[6px] shrink-0 bg-[#e5f1fb] border border-[#77b4ea]"><svg class="w-[10px] h-[14px] shrink-0" viewBox="0 0 10 14"><path d="M1 1l8 7H5l2 5-1.500.5L3.500 9 1 11z" fill="#fff" stroke="#555"/></svg><span class="ml-[6px]">选择</span></div>
        <div class="flex items-center w-[16px] pl-[3px] shrink-0"><i class="w-0 h-0 border-x-[3px] border-x-transparent border-t-[3px] border-t-black"></i></div>
        <i class="w-px h-[20px] mr-[7px] bg-[#bdbdbd]"></i>
        <div class="flex items-center gap-[5px] w-[50px] shrink-0"><svg class="w-[13px] h-4 shrink-0" viewBox="0 0 13 16"><path d="M1 2l11 11M12 13V8M12 13H7" fill="none" stroke="#1e50a8" stroke-width="1.300"/></svg><span>直线</span></div>
        <div class="flex items-center gap-[4px] w-[75px] shrink-0"><svg class="w-[15px] h-4 shrink-0" viewBox="0 0 15 16"><path d="M4 2a6.500 6.500 0 1 0 7 0" fill="none" stroke="#334a7a" stroke-width="1.400"/><path d="M7.500 6v6M4.500 9h6" stroke="#1e50a8"/><path d="M4 0v4h3" stroke="#334a7a" fill="none"/></svg><span>点加长度</span></div>
        <div class="flex items-center gap-[6px] w-[84px] shrink-0"><svg class="w-[13px] h-4 shrink-0" viewBox="0 0 13 16"><path d="M1 14Q2 4 11 2" fill="none" stroke="#2a4f90" stroke-width="1.300"/><circle cx="2" cy="13" r="1.400" fill="#d03030"/><circle cx="11" cy="2" r="1.400" fill="#d03030"/><circle cx="5" cy="6" r="1.200" fill="#d03030"/></svg><span>三点画弧</span><i class="w-0 h-0 border-x-[3px] border-x-transparent border-t-[3px] border-t-black"></i></div>
        <div class="flex items-center w-[56px] h-[22px] shrink-0 bg-white"><div class="flex items-center justify-center w-[13px] h-[22px] ml-auto bg-[#f0f0f0]"><i class="w-0 h-0 border-x-[3px] border-x-transparent border-t-[3px] border-t-black"></i></div></div>
        <div class="flex items-center gap-[4px] w-[50px] ml-[5px] shrink-0"><svg class="w-[15px] h-[12px] shrink-0" viewBox="0 0 15 12"><rect x=".5" y=".5" width="14" height="11" fill="#a8c6f0" stroke="#2a58a8"/></svg><span>矩形</span></div>
        <i class="w-px h-[20px] mr-[5px] bg-[#bdbdbd]"></i>
        <div class="flex items-center gap-[5px] shrink-0"><svg class="w-[15px] h-4 shrink-0" viewBox="0 0 15 16"><rect x="1" y="1.500" width="13" height="13" fill="#eef3fa" stroke="#555" stroke-dasharray="1 1"/><path d="M4 5h1M10 5h1M7 8h1M4 11h1M10 11h1" stroke="#1e3f80" stroke-width="2"/></svg><span>智能布置</span><i class="-ml-[3px] w-0 h-0 border-x-[3px] border-x-transparent border-t-[3px] border-t-black"></i></div>
      </div>
      <div class="flex items-center w-[31px] ml-[2px] pl-[3px] shrink-0 bg-[#f4f4f4]">
        <svg class="w-[3px] h-[14px] shrink-0" viewBox="0 0 3 14"><path d="M1 1v12" stroke="#aaa" stroke-width="2" stroke-dasharray="2 2"/></svg>
        <div class="w-[24px] h-[26px] ml-[1px] shrink-0 bg-gradient-to-r from-white to-[#f0f0f0]"></div>
      </div>
    </div>

    <!-- canvas -->
    <svg class="block w-[1178px] h-[506px] shrink-0 bg-black" viewBox="188 168 1178 506" shape-rendering="crispEdges">
      <g fill="none" stroke="#7d0000" stroke-width="1" shape-rendering="auto">
        <path d="M188 407L620 168M188 587L943 168M243 617L1052 168M680 674L1366 295M788 674L1366 355"/>
        <path d="M188 187L1366 617M755 168L1366 391M1338 194L1366 204M188 430L852 674"/>
      </g>
      <g fill="none" stroke="#008000" stroke-width="1" shape-rendering="auto">
        <path d="M188 291L326 331L450 360L588 389L612 394L800 420L988 441L1133 449L1271 452L1366 449"/>
        <path d="M188 397L426 455L505 471L588 487L600 490L900 530L1010 539L1028 541L1176 548L1258 551L1354 551L1366 550"/>
        <path d="M188 647L243 617M188 670h4"/>
      </g>
      <g fill="none" stroke="#ff0000" stroke-width="1" shape-rendering="auto">
        <path d="M188 183L265 206L430 256L488 270L560 286L660 305L967 344L1000 346L1050 350L1160 353L1260 352L1333 349"/>
        <path d="M703 168L1366 405M188 339L1102 674M188 610L365 674M463 674L1366 175M188 175L208 168M1322 203L1366 220"/>
      </g>
      <g fill="none" stroke="#008000" shape-rendering="auto">
        <circle cx="189" cy="181" r="11"/><circle cx="330" cy="662" r="12.500"/><circle cx="485" cy="662" r="12.500"/><circle cx="1068" cy="662" r="12.500"/><circle cx="1352" cy="405" r="12.500"/><circle cx="1352" cy="229" r="12.500"/>
      </g>
      <g fill="#d8d8d8" font-size="14" text-anchor="middle" font-family="Liberation Sans, sans-serif" shape-rendering="auto">
        <text x="330" y="667">1</text><text x="485" y="667">B</text><text x="1068" y="667">2</text><text x="1352" y="410">3</text><text x="1352" y="234">4</text>
      </g>
      <!-- white beam -->
      <polygon points="311,205 375,168 411,168 331,211" fill="#b4b4b4"/>
      <polygon points="266,205 331,168 375,168 311,205 430,250 415,257 278,210" fill="#e6e6e6"/>
      <polygon points="264,206 278,210 415,257 412,263 273,215 264,212" fill="#a8a8a8"/>
      <polygon points="273,215 412,263 410,268 270,221" fill="#dcdcdc"/>
      <polygon points="270,221 410,268 406,282 270,232" fill="#9a9a9a"/>
      <polygon points="415,257 430,250 428,266 406,282 410,268 412,263" fill="#aaaaaa"/>
      <!-- grey wall -->
      <polygon points="1120,168 1134,168 1115,318 1102,313" fill="#757575"/>
      <polygon points="1134,168 1342,168 1339,194 1115,318" fill="#888888"/>
      <polygon points="1337,321 1366,305 1366,331" fill="#e6e6e6"/>
      <polygon points="1337,321 1366,331 1366,363 1333,350" fill="#a0a0a0"/>
      <!-- blue block -->
      <polygon points="621,329 692,355 667,557 698,570 689,646 585,606" fill="#00509f"/>
      <polygon points="692,355 985,192 960,396 667,557" fill="#005bb4"/>
      <polygon points="621,329 910,168 920,168 985,192 692,355" fill="#0073e6"/>
      <polygon points="667,557 960,396 992,407 698,570" fill="#0073e6"/>
      <polygon points="698,570 992,407 982,485 689,646" fill="#005fbc"/>
      <!-- axes -->
      <g shape-rendering="auto">
        <path d="M243 625L213 613" stroke="#00ff00" stroke-width="3.500"/><polygon points="202,610 212,608 209,617" fill="#00ff00"/>
        <path d="M243 625L262 615" stroke="#ff0000" stroke-width="3.500"/><polygon points="269,610 262,610 265,617" fill="#ff0000"/>
        <path d="M243 625L247 590" stroke="#0a78ff" stroke-width="4"/><polygon points="244,591 252,591 248,578" fill="#0a78ff"/>
        <path d="M240 577h9l-9 10h10" fill="none" stroke="#0a78ff"/>
        <path d="M211 604l4 4 4-4M215 608v5" fill="none" stroke="#00c800"/>
        <path d="M249 604l7 8M256 604l-7 8" fill="none" stroke="#c80000"/>
      </g>
    </svg>

    <!-- snap bar -->
    <div class="flex h-[31px] shrink-0 ml-[212px]">
      <div class="flex items-center w-[262px] shrink-0 pl-[3px] bg-[#f7f7f7]">
        <svg class="w-[3px] h-[14px] shrink-0" viewBox="0 0 3 14"><path d="M1 1v12" stroke="#999" stroke-width="2" stroke-dasharray="2 2"/></svg>
        <div class="flex items-center gap-[5px] w-[48px] ml-[3px] shrink-0"><svg class="w-[15px] h-4 shrink-0" viewBox="0 0 15 16"><path d="M2 1l11 14M13 1L2 15" stroke="#1e4f96" stroke-width="1.600"/></svg><span>交点</span></div>
        <div class="flex items-center gap-[3px] w-[51px] h-[20px] pl-[4px] shrink-0 bg-[#d9ebfa] border border-[#3a96e8]"><svg class="w-[15px] h-4 shrink-0" viewBox="0 0 15 16"><path d="M7.500 1v13M0 14h15" stroke="#1e4f96"/></svg><span>垂点</span></div>
        <div class="flex items-center gap-[5px] w-[51px] h-[20px] pl-[2px] shrink-0 bg-[#d9ebfa] border border-[#3a96e8]"><svg class="w-[15px] h-4 shrink-0" viewBox="0 0 15 16"><path d="M0 8h15" stroke="#4a7ac0" stroke-width="2"/><rect x="5" y="6" width="5" height="4" fill="#1e3f90"/></svg><span>中点</span></div>
        <div class="flex items-center gap-[4px] w-[49px] ml-[6px] shrink-0"><svg class="w-[15px] h-4 shrink-0" viewBox="0 0 15 16"><path d="M7.500 1l6 6-2 8h-8l-2-8z" fill="none" stroke="#1e4f96" stroke-width="1.300"/></svg><span>顶点</span></div>
        <div class="flex items-center gap-[4px] shrink-0"><svg class="w-4 h-4 shrink-0" viewBox="0 0 16 16"><path d="M2 3v8l5 4 7-5M7 15V7" fill="none" stroke="#2a70c0" stroke-dasharray="2 1"/><path d="M10 1l3 3M13 1l-3 3" stroke="#333"/></svg><span>坐标</span></div>
      </div>
      <div class="flex items-center w-[412px] ml-[2px] shrink-0 pl-[3px] bg-[#f7f7f7]">
        <svg class="w-[3px] h-[14px] shrink-0" viewBox="0 0 3 14"><path d="M1 1v12" stroke="#999" stroke-width="2" stroke-dasharray="2 2"/></svg>
        <div class="flex items-center w-[60px] ml-[4px] shrink-0"><span>不偏移</span><i class="ml-[10px] w-0 h-0 border-x-[3px] border-x-transparent border-t-[3px] border-t-black"></i></div>
        <i class="w-px h-[20px] mr-[2px] bg-[#bdbdbd]"></i>
        <span class="w-[19px] shrink-0 text-[#555]">X=</span>
        <div class="flex items-center justify-end w-[58px] h-[20px] pr-[14px] shrink-0 bg-white border border-[#8a8a8a] text-[#555]">0</div>
        <span class="w-[28px] ml-[1px] shrink-0 text-[#333]">mm</span>
        <span class="w-[18px] shrink-0 text-[#555]">Y=</span>
        <div class="flex items-center justify-end w-[58px] h-[20px] pr-[14px] shrink-0 bg-white border border-[#8a8a8a] text-[#555]">0</div>
        <span class="w-[26px] ml-[2px] shrink-0 text-[#333]">mm</span>
        <i class="w-px h-[20px] mr-[2px] bg-[#bdbdbd]"></i>
        <i class="w-[11px] h-[11px] shrink-0 bg-white border border-[#777]"></i>
        <span class="w-[28px] ml-[10px] shrink-0">旋转</span>
        <div class="flex items-center justify-end w-[63px] h-[20px] pr-[14px] shrink-0 bg-white border border-[#8a8a8a] text-[#555]">0.000</div>
        <span class="ml-[6px] shrink-0">°</span>
      </div>
    </div>
  </div>
</div>

<!-- floating dock popup -->
<div class="absolute left-[167px] top-[95px] w-[51px] h-[48px] bg-[#f8f8f8] shadow-[1px_1px_2px_rgba(0,0,0,0.4)]">
  <div class="flex h-[26px]">
    <span class="ml-[3px] mt-[4px] text-[#b5b5b5]">Poi...</span>
    <span class="flex items-center justify-center w-[19px] h-[19px] ml-auto mt-[2px] bg-[#e2e2e2] text-white text-[10px]">x</span>
  </div>
  <div class="flex items-center justify-center h-[22px] bg-[#f0f0f0] border-2 border-[#777]">开始</div>
</div>

<!-- IME bar -->
<div class="absolute left-[982px] top-[29px] flex items-center h-[27px]">
  <span class="relative z-10 flex items-center justify-center w-[26px] h-[24px] rounded-[3px] -rotate-12 bg-[#f04e23] text-white font-bold text-[22px] leading-none [font-family:'Liberation_Sans',sans-serif]">S</span>
  <div class="flex items-center h-[23px] w-[157px] -mt-[1px] pl-[6px] bg-white/95 border border-[#b4c6da]">
    <span class="w-[23px] font-bold text-[14px] text-[#1a6fc0] [font-family:'Noto_Sans_CJK_SC',sans-serif]">英</span>
    <svg class="w-[14px] h-[14px] shrink-0" viewBox="0 0 14 14"><path d="M9 1a6 6 0 0 1-8 8 6.500 6.500 0 1 0 8-8z" fill="#1a6fc0"/></svg>
    <svg class="w-[10px] h-[12px] ml-[9px] shrink-0" viewBox="0 0 10 12"><circle cx="2" cy="3" r="1.600" fill="#1a6fc0"/><path d="M8 5q1 4-2 5 2-2 1-5z" fill="#1a6fc0"/></svg>
    <svg class="w-4 h-3 ml-[10px] shrink-0" viewBox="0 0 16 12"><rect width="16" height="12" rx="2" fill="#1a7ad0"/><path d="M2 3h12M2 6h12" stroke="#fff" stroke-dasharray="1 1"/><path d="M4 9h8" stroke="#fff"/></svg>
    <svg class="w-[14px] h-[14px] ml-[8px] shrink-0" viewBox="0 0 14 14"><circle cx="6" cy="3" r="3" fill="#a8bccf"/><path d="M0 13q0-6 6-6t5 6z" fill="#a8bccf"/><rect x="8" y="8" width="6" height="6" fill="#c8d4e0"/></svg>
    <svg class="w-[14px] h-[14px] ml-[7px] shrink-0" viewBox="0 0 14 14"><path d="M4 0l3 1 3-1 4 3-2 3-1-1v9H3V5L2 6 0 3z" fill="#1a6fc0"/></svg>
    <svg class="w-[15px] h-[15px] ml-[8px] shrink-0" viewBox="0 0 15 15"><path d="M14 3l-3 3-2-2 3-3a4 4 0 0 0-5 5L1 12l2 2 6-6a4 4 0 0 0 5-5z" fill="#1a6fc0"/></svg>
  </div>
</div>

<!-- floating speed widget -->
<div class="absolute left-[1085px] -top-[21px] w-[40px] h-[40px] rounded-full bg-[#4cc764] shadow-[0_1px_3px_rgba(0,0,0,0.5)]"></div>
<div class="absolute left-[1101px] -top-[2px] flex items-center w-[66px] h-[20px] pl-[3px] rounded-full bg-[#eef1f4] shadow-[0_1px_3px_rgba(0,0,0,0.5)]">
  <div class="flex items-center w-[60px] h-[12px] px-[3px] rounded-[4px] bg-[#2b8ce0]">
    <div class="w-[37px] h-[7px] bg-[repeating-linear-gradient(90deg,#8ee020_0,#8ee020_2px,#3ea878_2px,#3ea878_3px)]"></div>
    <div class="w-[16px] h-[7px] bg-[repeating-linear-gradient(90deg,#7ab8ec_0,#7ab8ec_2px,#4a9ae0_2px,#4a9ae0_3px)]"></div>
  </div>
</div>

</body>
</html>
